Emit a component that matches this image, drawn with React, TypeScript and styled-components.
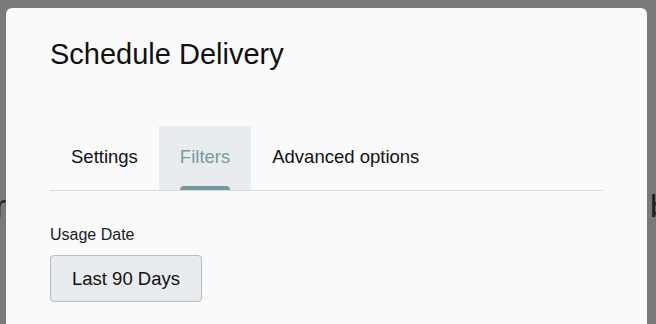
import * as React from "react";
import styled, { createGlobalStyle } from "styled-components";

const GlobalStyle = createGlobalStyle`
  html, body {
    margin: 0;
    padding: 0;
    height: 100%;
    overflow: hidden;
    background: #7a7a7a;
    font-family: "Liberation Sans", Arial, Helvetica, sans-serif;
  }
`;

const Page = styled.div`
  height: 324px;
  padding-top: 188px;
  box-sizing: border-box;
  display: flex;
  justify-content: space-between;
`;

const PageSide = styled.div<{ $align: "start" | "end" }>`
  width: 6px;
  display: flex;
  justify-content: ${(p) => (p.$align === "end" ? "flex-end" : "flex-start")};
  white-space: nowrap;
  font-size: 32px;
  line-height: 36px;
  color: #1e1e1e;
`;

const Modal = styled.div`
  position: fixed;
  top: 8px;
  left: 6px;
  width: 641px;
  height: 400px;
  box-sizing: border-box;
  padding: 30px 44px 0;
  background: #fafafa;
  border-radius: 6px;
`;

const Title = styled.h2`
  margin: 0;
  font-size: 29px;
  line-height: 32px;
  font-weight: 400;
  color: #111;
`;

const TabList = styled.div`
  margin-top: 56px;
  display: flex;
  border-bottom: 1px solid #dadada;
`;

const Tab = styled.button<{ $active?: boolean }>`
  position: relative;
  display: flex;
  padding: 20px 21px 23px;
  border: none;
  margin: 0;
  background: ${(p) => (p.$active ? "#e9ecee" : "transparent")};
  color: ${(p) => (p.$active ? "#739ba0" : "#111")};
  font-family: inherit;
  font-size: 18.5px;
  line-height: 21px;
  cursor: pointer;
`;

const Indicator = styled.span`
  position: absolute;
  left: 21px;
  right: 21px;
  bottom: 0;
  height: 4px;
  border-radius: 4px 4px 0 0;
  background: #719aa0;
`;

const Section = styled.div`
  margin-top: 35px;
  display: flex;
  flex-direction: column;
  align-items: flex-start;
  gap: 11px;
`;

const FieldLabel = styled.div`
  font-size: 16px;
  line-height: 18px;
  color: #1c1c1c;
`;

const SelectButton = styled.button`
  height: 47px;
  padding: 0 21px;
  border: 1px solid #b9bcbe;
  border-radius: 4px;
  background: #e8ebed;
  font-family: inherit;
  font-size: 18.5px;
  color: #111;
  cursor: pointer;
`;

const tabs = ["Settings", "Filters", "Advanced options"];

export default function App() {
  const active = "Filters";
  return (
    <>
      <GlobalStyle />
      <Page>
        <PageSide $align="end">Your order</PageSide>
        <PageSide $align="start">bundle</PageSide>
      </Page>
      <Modal>
        <Title>Schedule Delivery</Title>
        <TabList>
          {tabs.map((t) => (
            <Tab key={t} $active={t === active}>
              {t}
              {t === active && <Indicator />}
            </Tab>
          ))}
        </TabList>
        <Section>
          <FieldLabel>Usage Date</FieldLabel>
          <SelectButton>Last 90 Days</SelectButton>
        </Section>
      </Modal>
    </>
  );
}
